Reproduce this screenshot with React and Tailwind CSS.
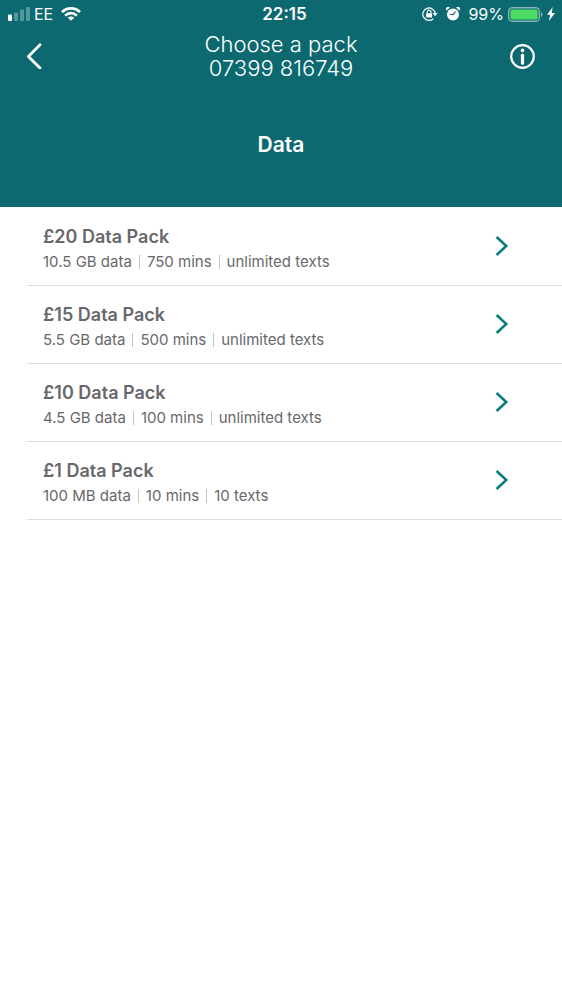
import React from "react";

const packs = [
  { name: "£20 Data Pack", parts: ["10.5 GB data", "750 mins", "unlimited texts"] },
  { name: "£15 Data Pack", parts: ["5.5 GB data", "500 mins", "unlimited texts"] },
  { name: "£10 Data Pack", parts: ["4.5 GB data", "100 mins", "unlimited texts"] },
  { name: "£1 Data Pack", parts: ["100 MB data", "10 mins", "10 texts"] },
];

function SignalIcon() {
  return (
    <svg width="22" height="14" viewBox="0 0 22 14" fill="#fff" aria-hidden="true">
      <rect x="0" y="7.5" width="4" height="6.5" rx="1" />
      <rect x="6" y="5.5" width="4" height="8.5" rx="1" opacity=".3" />
      <rect x="12" y="2.5" width="4" height="11.5" rx="1" opacity=".3" />
      <rect x="18" y="0" width="4" height="14" rx="1" opacity=".3" />
    </svg>
  );
}

function WifiIcon() {
  return (
    <svg width="20" height="14" viewBox="0 0 20 14" fill="none" stroke="#fff" strokeWidth="2.7" aria-hidden="true">
      <path d="M1 5.1A12.7 12.7 0 0 1 19 5.1" />
      <path d="M4.2 8.6A8.2 8.2 0 0 1 15.8 8.6" />
      <path d="M10 13.8L6.8 10.7A4.6 4.6 0 0 1 13.2 10.7Z" fill="#fff" stroke="none" />
    </svg>
  );
}

function RotationLockIcon() {
  return (
    <svg width="16" height="14" viewBox="0 0 16 14" fill="none" aria-hidden="true">
      <path d="M11.3 11.7A6.2 6.2 0 1 1 13.2 6.4" stroke="#fff" strokeWidth="1.2" />
      <path d="M10.6 6.1h5l-2.5 3.2Z" fill="#fff" />
      <rect x="4.1" y="6.2" width="6" height="4.2" rx=".5" fill="#fff" />
      <path d="M5.3 6.5V4.9a1.8 1.8 0 0 1 3.6 0v1.6" stroke="#fff" strokeWidth="1.1" />
    </svg>
  );
}

function AlarmIcon() {
  return (
    <svg width="14" height="14" viewBox="0 0 14 14" aria-hidden="true">
      <g fill="#fff">
        <circle cx="7" cy="7.6" r="6" />
        <path d="M.4 3.6A2.2 2.2 0 0 1 3.8 .7Z" />
        <path d="M13.6 3.6A2.2 2.2 0 0 0 10.2 .7Z" />
      </g>
      <path d="M9.3 4.9L7.1 7.6L4.3 7.3" fill="none" stroke="#0c6970" strokeWidth="1.1" strokeLinecap="round" />
    </svg>
  );
}

function BatteryIcon() {
  return (
    <svg width="35" height="15" viewBox="0 0 35 15" aria-hidden="true">
      <rect x=".7" y=".7" width="30.6" height="13.6" rx="3.6" fill="none" stroke="#fff" strokeOpacity=".5" strokeWidth="1.4" />
      <rect x="2.4" y="2.4" width="27.2" height="10.2" rx="1.6" fill="#4cd964" />
      <path d="M33 5a2.8 2.8 0 0 1 0 5Z" fill="#fff" fillOpacity=".5" />
    </svg>
  );
}

function BoltIcon() {
  return (
    <svg width="8" height="14" viewBox="0 0 8 14" fill="#fff" aria-hidden="true">
      <path d="M5.7 0L0 7.8h3.2L1.9 14L8 5.9H4.7Z" />
    </svg>
  );
}

function StatusBar() {
  return (
    <div className="grid h-7 grid-cols-3 items-center pl-2 pr-[7px] text-base leading-5">
      <div className="flex items-center">
        <SignalIcon />
        <span className="ml-1 mr-2">EE</span>
        <WifiIcon />
      </div>
      <div className="pl-1.5 text-center text-[17px] font-semibold">22:15</div>
      <div className="flex items-center justify-end">
        <RotationLockIcon />
        <span className="ml-2 mr-2">
          <AlarmIcon />
        </span>
        <span>99%</span>
        <span className="ml-1 mr-1">
          <BatteryIcon />
        </span>
        <BoltIcon />
      </div>
    </div>
  );
}

export default function App() {
  return (
    <div className="min-h-screen bg-white font-['Inter',sans-serif]">
      <header className="bg-[#0c6970] pb-12 text-white">
        <StatusBar />
        <div className="flex items-start justify-between px-6 pt-1">
          <button type="button" aria-label="Back" className="flex h-12 w-8 items-center">
            <svg width="20" height="26" viewBox="0 0 20 26" fill="none" stroke="#fff" strokeWidth="2.8" strokeLinecap="round" strokeLinejoin="round">
              <path d="M16 1.8L4.4 13.4L16 25" />
            </svg>
          </button>
          <h1 className="text-center text-[22px] font-light leading-6">
            Choose a pack
            <br />
            07399 816749
          </h1>
          <button type="button" aria-label="Information" className="flex h-12 w-8 items-center justify-center">
            <svg width="26" height="26" viewBox="0 0 26 26" fill="none" stroke="#fff">
              <circle cx="13.5" cy="13.5" r="11.3" strokeWidth="2.2" />
              <path d="M13.5 12.2V20.2" strokeWidth="3.2" strokeLinecap="round" />
              <circle cx="13.5" cy="7.4" r="1.8" fill="#fff" stroke="none" />
            </svg>
          </button>
        </div>
        <h2 className="pt-[51px] text-center text-[21px] font-semibold leading-7">Data</h2>
      </header>
      <main>
        <ul className="pl-[27px] pt-px">
          {packs.map((pack) => (
            <li key={pack.name} className="border-b border-[#dedede]">
              <button type="button" className="flex w-full items-center justify-between pb-[11px] pl-4 pr-[52px] pt-4 text-left text-[#68686c]">
                <span className="block">
                  <span className="block text-[18px] font-semibold leading-[25px]">{pack.name}</span>
                  <span className="flex items-center text-[15px] leading-[25px]">
                    {pack.parts.map((part, i) => (
                      <span key={part} className={i === 0 ? "" : "ml-[7px] flex items-center"}>
                        {i > 0 && <span className="mr-[7px] h-3.5 w-px bg-[#c4c4c4]" />}
                        {part}
                      </span>
                    ))}
                  </span>
                </span>
                <svg className="mb-1" width="16" height="22" viewBox="0 0 16 22" fill="none" stroke="#087b80" strokeWidth="2.5" aria-hidden="true">
                  <path d="M2.6 1L12.3 10L2.6 19" />
                </svg>
              </button>
            </li>
          ))}
        </ul>
      </main>
    </div>
  );
}
